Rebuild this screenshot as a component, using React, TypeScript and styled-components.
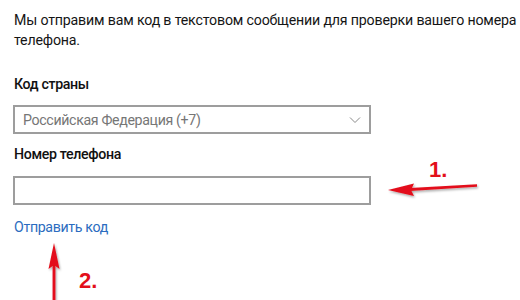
import styled, { createGlobalStyle } from "styled-components";

const GlobalStyle = createGlobalStyle`
  html, body {
    margin: 0;
    padding: 0;
    background: #ffffff;
  }
  body {
    font-family: Roboto, "Noto Sans", sans-serif;
    color: #111;
  }
`;

const Page = styled.div`
  position: relative;
  width: 520px;
  height: 300px;
  overflow: hidden;
  box-sizing: border-box;
  padding: 10px 13px 0 14px;
  display: flex;
  flex-direction: column;
  font-size: 14.2px;
  letter-spacing: -0.35px;
`;

const Intro = styled.p`
  margin: 0 -10px 0 0;
  line-height: 20px;
  letter-spacing: -0.18px;
  color: #151515;
`;

const Label = styled.div<{ $top: number }>`
  margin-top: ${({ $top }) => $top}px;
  line-height: 20px;
  font-weight: 500;
  color: #111;
`;

const Field = styled.div<{ $top: number }>`
  margin-top: ${({ $top }) => $top}px;
  margin-left: -1px;
  width: 358px;
  height: 29px;
  box-sizing: border-box;
  border: 2px solid #9d9d9d;
  display: flex;
  align-items: center;
  justify-content: space-between;
  padding: 0 8px 0 8px;
  background: #fff;
`;

const SelectValue = styled.span`
  color: #767676;
`;

const Chevron = () => (
  <svg width="12" height="8" viewBox="0 0 12 8">
    <path d="M1 1.5 L6 6.5 L11 1.5" fill="none" stroke="#8a8a8a" strokeWidth="1" />
  </svg>
);

const SendLink = styled.a`
  margin-top: 12px;
  line-height: 20px;
  color: #2b6cc0;
  text-decoration: none;
  cursor: pointer;
  align-self: flex-start;
`;

const Annotations = styled.svg`
  position: absolute;
  left: 0;
  top: 0;
  pointer-events: none;
  overflow: visible;
`;

const Mark = styled.text`
  font-family: "Liberation Sans", Arial, sans-serif;
  font-weight: 700;
  font-size: 22px;
  fill: #e3101a;
`;

export default function App() {
  return (
    <>
      <GlobalStyle />
      <Page>
        <Intro>
          Мы отправим вам код в текстовом сообщении для проверки вашего номера
          телефона.
        </Intro>
        <Label $top={24}>Код страны</Label>
        <Field $top={11}>
          <SelectValue>Российская Федерация (+7)</SelectValue>
          <Chevron />
        </Field>
        <Label $top={10}>Номер телефона</Label>
        <Field $top={12} />
        <SendLink>Отправить код</SendLink>
      </Page>
      <Annotations width="520" height="300" viewBox="0 0 520 300">
        <defs>
          <filter id="sh" x="-20%" y="-50%" width="140%" height="200%">
            <feDropShadow dx="1" dy="1.5" stdDeviation="1.2" floodColor="#000" floodOpacity="0.35" />
          </filter>
        </defs>
        <g filter="url(#sh)" fill="#e3101a">
          <path d="M477 184.2 L410 188 L410 191 L477 186.8 Z" />
          <path d="M388 190 L414 183.5 L411 190 L414 196 Z" />
          <path d="M52.6 300 L52.6 264 L55.4 264 L55.4 300 Z" />
          <path d="M54 243 L48.5 269 L54 265 L59.5 269 Z" />
        </g>
        <Mark x="429" y="177">1.</Mark>
        <Mark x="79" y="288">2.</Mark>
      </Annotations>
    </>
  );
}
